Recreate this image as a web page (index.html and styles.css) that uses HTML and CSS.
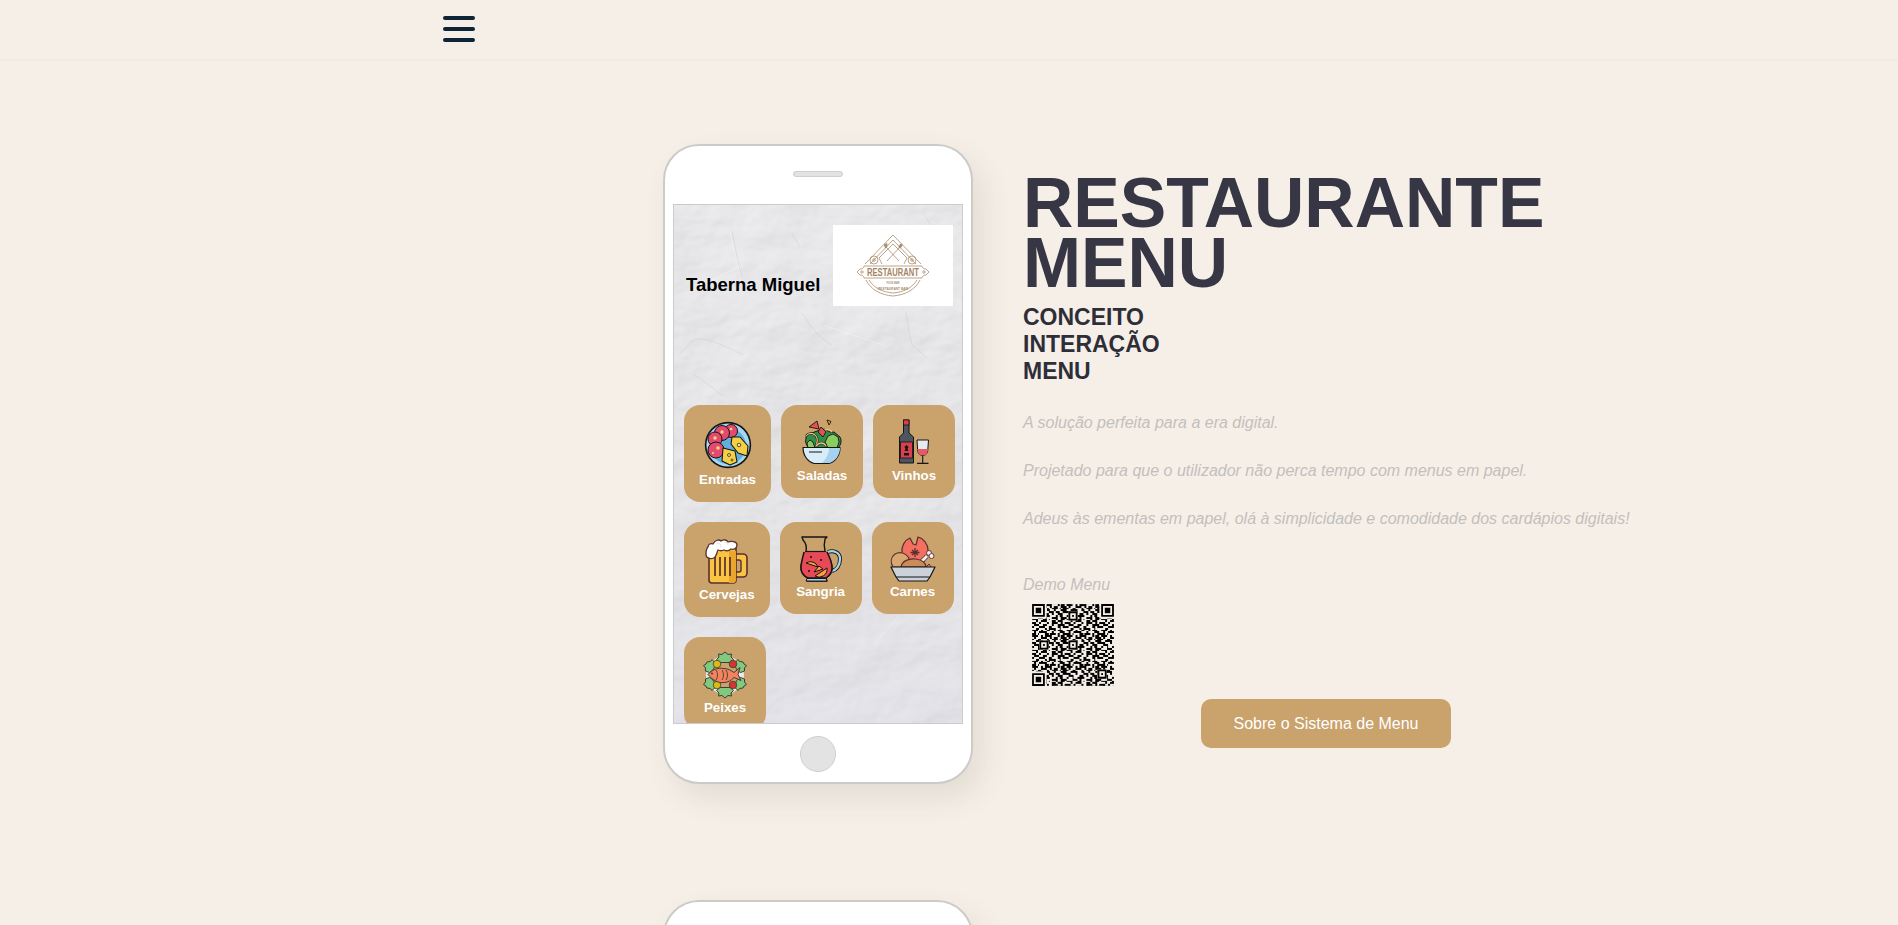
FILE: index.html
```html
<!DOCTYPE html>
<html lang="pt">
<head>
<meta charset="utf-8">
<title>Restaurante Menu</title>
<link rel="stylesheet" href="styles.css">
</head>
<body>
<header class="topbar">
  <button class="burger" aria-label="Menu"><span></span><span></span><span></span></button>
</header>

<main class="page">
  <section class="hero">
    <div class="phone">
      <div class="speaker"></div>
      <div class="screen">
        <svg class="plaster" width="288" height="518" aria-hidden="true">
          <defs>
            <filter id="plasterFx" x="0" y="0" width="100%" height="100%">
              <feTurbulence type="fractalNoise" baseFrequency="0.014 0.02" numOctaves="4" seed="11" result="n"/>
              <feDiffuseLighting in="n" surfaceScale="3" diffuseConstant="1.02" lighting-color="#eeeef1">
                <feDistantLight azimuth="225" elevation="62"/>
              </feDiffuseLighting>
            </filter>
            <linearGradient id="plasterTint" x1="0" y1="0" x2="0" y2="1">
              <stop offset="0" stop-color="#f2f2f2" stop-opacity=".35"/>
              <stop offset=".55" stop-color="#e6e6ea" stop-opacity=".2"/>
              <stop offset="1" stop-color="#dfdfe8" stop-opacity=".5"/>
            </linearGradient>
          </defs>
          <rect width="288" height="518" filter="url(#plasterFx)"/>
          <rect width="288" height="518" fill="url(#plasterTint)"/>
          <g class="streaks">
            <path d="M58 26c3 16 6 32 10 48M118 28l8 14M5 150c8-8 14-18 24-16 14 3 28 10 40 16M232 106c2 12 3 24 6 34l14 12M250 10l10 14M128 108c8 10 14 24 30 32M215 380c14-12 26-24 40-36M20 170c10 6 18 12 30 22"/>
          </g>
          <g class="streaks-light">
            <path d="M56 26c3 18 8 34 12 50M10 90c20-10 40-22 60-30M150 120c20 8 40 14 60 20M30 200c24 10 46 24 70 34M200 440c20-24 40-46 60-70"/>
          </g>
        </svg>
        <div class="screen-body">
          <div class="menu-head">
            <div class="venue">Taberna Miguel</div>
            <div class="logo">
              <svg width="120" height="81" viewBox="0 0 120 81" role="img" aria-label="Restaurant">
                <g class="logo-line">
                  <path d="M32 39L60 10l28 29"/>
                  <path d="M37 39L60 15l23 24"/>
                  <path d="M60 19L46 33l3 6M60 19l14 14-3 6"/>
                  <path d="M53 22l13 14M67 22L54 36"/>
                  <circle cx="41" cy="35" r="4"/>
                  <circle cx="79" cy="35" r="4"/>
                  <circle cx="41" cy="35" r="1.300"/>
                  <circle cx="79" cy="35" r="1.300"/>
                  <path d="M31 41h58c0 2 2 3 4 3l3 3-3 3c-2 0-4 1-4 3H31c0-2-2-3-4-3l-3-3 3-3c2 0 4-1 4-3z"/>
                  <circle cx="29" cy="47" r="1.200"/>
                  <circle cx="91" cy="47" r="1.200"/>
                  <path d="M36 55c5 8 13 12 24 13 11-1 19-5 24-13"/>
                  <path d="M33 55c5 10 15 15 27 16 12-1 22-6 27-16"/>
                </g>
                <ellipse class="logo-fill" cx="67.500" cy="21" rx="1.500" ry="2.500" transform="rotate(40 67.500 21)"/>
                <path class="logo-fill" d="M50.500 19l1 .5.500-1 1 .5.500-1 1 .5-.500 4-2 .5z"/>
                <text class="logo-name" x="60" y="51.300" text-anchor="middle" textLength="52" lengthAdjust="spacingAndGlyphs">RESTAURANT</text>
                <text class="logo-small" x="60" y="58.500" text-anchor="middle" textLength="13" lengthAdjust="spacingAndGlyphs">FOOD BAR</text>
                <text class="logo-small" x="60" y="64.500" text-anchor="middle" textLength="30" lengthAdjust="spacingAndGlyphs">RESTAURANT BAR</text>
              </svg>
            </div>
          </div>

          <div class="cards">
            <a class="card card-xl">
              <div class="pic">
                <svg viewBox="0 0 48 48" width="48" height="48" aria-hidden="true">
                  <circle cx="24" cy="24" r="23.200" fill="#151515"/>
                  <circle cx="24" cy="24" r="21.600" fill="#a5d8f3"/>
                  <circle cx="24" cy="25" r="18" fill="#62aedd"/>
                  <g stroke="#151515" stroke-width="1" fill="#e34a6f">
                    <circle cx="27" cy="10" r="6.500"/>
                    <circle cx="18" cy="12" r="7.500"/>
                    <circle cx="11" cy="18" r="7"/>
                    <circle cx="12" cy="29" r="8"/>
                  </g>
                  <g fill="#f7d774">
                    <circle cx="18" cy="11" r="1.700"/><circle cx="11" cy="17" r="1.700"/><circle cx="27" cy="8" r="1.300"/><circle cx="14" cy="27" r="1.800"/><circle cx="9" cy="32" r="1"/>
                  </g>
                  <g stroke="#151515" stroke-width="1.100" fill="#f6cf45" stroke-linejoin="round">
                    <path d="M28 16h8l8 9-1 10-9-3-7-9z"/>
                    <path d="M19 27l12 3 2 11-7 3-8-4z"/>
                  </g>
                  <g fill="#fbe88f" stroke="#151515" stroke-width=".7">
                    <circle cx="35" cy="24" r="1.800"/><circle cx="25" cy="34" r="1.500"/><circle cx="28" cy="39" r="1"/>
                  </g>
                </svg>
              </div>
              <span class="label">Entradas</span>
            </a>

            <a class="card">
              <div class="pic">
                <svg viewBox="0 0 48 48" width="48" height="48" aria-hidden="true">
                  <path d="M8 19c0-3 3-5 6-5l5-2 7-2 6 3 4 0 6 5c2 4 1 8-2 11H11c-3-3-4-6-3-10z" fill="#2f8f4a" stroke="#151515" stroke-width="1"/>
                  <path d="M30 17l5-2 5 3 1 5-2 6h-9l-3-6z" fill="#8ccb5e" stroke="#151515" stroke-width=".9"/>
                  <path d="M9 24l3-3 3 2 2 6H10z" fill="#8ccb5e" stroke="#151515" stroke-width=".9"/>
                  <path d="M8 17c3-4 8-3 10 0s2 5 0 9" fill="none" stroke="#151515" stroke-width="2.300"/>
                  <path d="M8 17c3-4 8-3 10 0s2 5 0 9" fill="none" stroke="#f4c27c" stroke-width="1.200"/>
                  <path d="M18 27c3-4 8-4 10 0" fill="none" stroke="#151515" stroke-width="2.500"/>
                  <path d="M18 27c3-4 8-4 10 0" fill="none" stroke="#f4c27c" stroke-width="1.300"/>
                  <path d="M25 12c3-2 7-2 9 1" fill="none" stroke="#f4c27c" stroke-width="1.500"/>
                  <path d="M11 8l8-6 2 8z" fill="#e94f4f" stroke="#151515" stroke-width=".9" stroke-linejoin="round"/>
                  <path d="M20 13l3-5 5 5-3 5z" fill="#e94f4f" stroke="#151515" stroke-width=".9" stroke-linejoin="round"/>
                  <path d="M29 1l4 1.500-2 3.500z" fill="#f7a823" stroke="#151515" stroke-width=".9" stroke-linejoin="round"/>
                  <path d="M5 28.500h37c0 9-6 15-11 16H16c-5-1-11-7-11-16z" fill="#d9ecfa" stroke="#151515" stroke-width="1.200" stroke-linejoin="round"/>
                  <path d="M31 29c0 6-3 11-7 15h7c5-1 11-7 11-15z" fill="#a6d2ef"/>
                  <path d="M5 28.500h37M11 33h13" fill="none" stroke="#151515" stroke-width="1"/>
                </svg>
              </div>
              <span class="label">Saladas</span>
            </a>

            <a class="card">
              <div class="pic">
                <svg viewBox="0 0 48 48" width="48" height="48" aria-hidden="true">
                  <path d="M13.500 1h5.500v13l4.500 4v26h-14V18l4-4z" fill="#4c5560" stroke="#151515" stroke-width="1" stroke-linejoin="round"/>
                  <rect x="13.500" y="1" width="5.500" height="5" fill="#d93f4c" stroke="#151515" stroke-width=".8"/>
                  <rect x="10.500" y="23" width="12" height="16" fill="#d93f4c" stroke="#151515" stroke-width=".8"/>
                  <path d="M16.500 26l2 2-1 2 1 2h-4l1-2-1-2z" fill="#151515"/>
                  <rect x="14" y="34" width="5" height="2.500" fill="#151515"/>
                  <path d="M27 21h11.500l-.8 11c-.4 3-2.500 4.500-5 4.500s-4.600-1.500-5-4.500z" fill="#e7eaee" stroke="#151515" stroke-width="1" stroke-linejoin="round"/>
                  <path d="M27.400 30h10.700l-.4 2c-.4 3-2.500 4.500-5 4.500s-4.600-1.500-5-4.500z" fill="#e55a66"/>
                  <path d="M32.700 36.500V44M27 44.400h11.500" fill="none" stroke="#151515" stroke-width="1.100"/>
                </svg>
              </div>
              <span class="label">Vinhos</span>
            </a>

            <a class="card card-lg">
              <div class="pic">
                <svg viewBox="0 0 48 48" width="48" height="48" aria-hidden="true">
                  <path d="M32 17h8a4 4 0 0 1 4 4v15a4 4 0 0 1-4 4h-8z" fill="#f9c440" stroke="#5b2e33" stroke-width="1.600" stroke-linejoin="round"/>
                  <path d="M32 23h4c1 0 2 1 2 2v8c0 1-1 2-2 2h-4z" fill="#c9a26c" stroke="#5b2e33" stroke-width="1.400"/>
                  <path d="M6 10h27v33a3 3 0 0 1-3 3H9a3 3 0 0 1-3-3z" fill="#f9c440" stroke="#5b2e33" stroke-width="1.600"/>
                  <path d="M26 14h7v29a3 3 0 0 1-3 3h-4z" fill="#e9a52c"/>
                  <path d="M12 20v19M17 20v19M22 20v19M27 20v19" stroke="#5b2e33" stroke-width="1.700" fill="none"/>
                  <path d="M6 21c-2 0-3-2-3-4 0-3 0-5 2-7 0-3 3-4 5-3 2-4 6-5 8-3 3-2 6-1 7 1 3-1 9-1 9 3 0 3-3 5-6 4-2 2-5 2-7 1-2 1-4 1-6 0-1 2-1 4-2 5 0 2-4 5-7 3z" fill="#fff" stroke="#5b2e33" stroke-width="1.300" stroke-linejoin="round"/>
                  <path d="M14 6c3 0 4 2 4 4M22 5c2 0 3 1 3 3" fill="none" stroke="#ddd" stroke-width="1"/>
                </svg>
              </div>
              <span class="label">Cervejas</span>
            </a>

            <a class="card card-sm">
              <div class="pic">
                <svg viewBox="0 0 48 48" width="48" height="48" aria-hidden="true">
                  <path d="M31 16c5-2 12 0 12 7 0 7-4 11-8 12" fill="none" stroke="#151515" stroke-width="4"/>
                  <path d="M31 16c5-2 12 0 12 7 0 7-4 11-8 12" fill="none" stroke="#a9d5e8" stroke-width="2.200"/>
                  <path d="M5 1h25l-2 2c-1 4-1 8 0 12 2 4 7 9 7 17 0 5-3 8-6 10l1 3H10l1-3c-4-2-7-5-7-10 0-8 4-12 5-16 1-5 0-9-3-12z" fill="#c9a26c" stroke="#151515" stroke-width="1.400" stroke-linejoin="round"/>
                  <path d="M7 16h23c2 4 5 9 5 16 0 5-3 8-6 10H11c-4-2-7-5-7-10 0-7 2-12 3-16z" fill="#e74a56"/>
                  <path d="M8 15.500h20" stroke="#151515" stroke-width="1.200"/>
                  <path d="M10 42.500h19l1 2.500H9z" fill="#a9d5e8" stroke="#151515" stroke-width="1"/>
                  <path d="M9 27a8 8 0 0 1 12 4L9 27z" fill="#f7a23c" stroke="#151515" stroke-width="1"/>
                  <path d="M18 40a8 8 0 0 0 12-8z" fill="#f7a23c" stroke="#151515" stroke-width="1"/>
                  <path d="M17 36l5-6 4 3z" fill="#f7a23c" stroke="#151515" stroke-width="1"/>
                  <circle cx="14" cy="21" r="1" fill="#151515"/><circle cx="24" cy="24" r="1" fill="#151515"/><circle cx="12" cy="35" r="1" fill="#151515"/>
                  <path d="M4 32c0 5 3 8 7 10h18c3-2 6-5 6-10M7 16c-1 5-3 10-3 16M30 16c2 4 5 9 5 16" fill="none" stroke="#151515" stroke-width="1.500"/>
                </svg>
              </div>
              <span class="label">Sangria</span>
            </a>

            <a class="card card-sm">
              <div class="pic">
                <svg viewBox="0 0 48 48" width="48" height="48" aria-hidden="true">
                  <path d="M13 17c-1-7 3-13 8-15l3 6 3 1 2-8c5 1 10 7 10 13 0 5-2 9-5 12l-14 3c-4-2-6-7-7-12z" fill="#f2705d" stroke="#5b2e33" stroke-width="1.200" stroke-linejoin="round"/>
                  <path d="M26 12v9M21.500 16.500h9M23 14l6 5M29 14l-6 5" stroke="#5b2e33" stroke-width="1.300"/>
                  <path d="M32 26l6-6" stroke="#5b2e33" stroke-width="4.500"/>
                  <path d="M32 26l6-6" stroke="#f5f3ee" stroke-width="2.800"/>
                  <circle cx="40" cy="17" r="2.500" fill="#f5f3ee" stroke="#5b2e33" stroke-width=".9"/>
                  <circle cx="42.500" cy="20" r="2.500" fill="#f5f3ee" stroke="#5b2e33" stroke-width=".9"/>
                  <path d="M4 31c-3-5-2-10 2-13 5-3 11-1 14 4l-3 9z" fill="#d9a871" stroke="#5b2e33" stroke-width="1.200" stroke-linejoin="round"/>
                  <path d="M12 31c1-6 8-9 15-8 6 1 10 4 10 8z" fill="#c98d58" stroke="#5b2e33" stroke-width="1.200" stroke-linejoin="round"/>
                  <path d="M37 31l3-3 2 3" fill="#f2705d" stroke="#5b2e33" stroke-width="1"/>
                  <path d="M2 31h44l-5 10-3 4H10l-3-4z" fill="#ccd2d9" stroke="#151515" stroke-width="1.200" stroke-linejoin="round"/>
                  <path d="M7 41h34" stroke="#151515" stroke-width="1"/>
                </svg>
              </div>
              <span class="label">Carnes</span>
            </a>

            <a class="card">
              <div class="pic">
                <svg viewBox="0 0 48 48" width="48" height="48" aria-hidden="true">
                  <circle cx="24" cy="24" r="16" fill="none" stroke="#e8eaec" stroke-width="6"/>
                  <g fill="#82c97d" stroke="#3a3f3a" stroke-width="1" stroke-linejoin="round">
                    <path d="M24 1l3 2.500 3.500-.5-.5 3 2.500 2.500-3.500 3h-10l-3.500-3 2.500-2.500-.5-3 3.500.5z"/>
                    <path d="M24 47l3-2.500 3.500.5-.5-3 2.500-2.500-3.500-3h-10l-3.500 3 2.500 2.500-.5 3 3.500-.5z"/>
                    <path d="M6 11l3.500-.5 1.500-2 3 3 .5 3-3 5-3 2-4-1.500v-3l-2-2.500 2.500-1.500z"/>
                    <path d="M42 11l-3.500-.5-1.500-2-3 3-.5 3 3 5 3 2 4-1.500v-3l2-2.500-2.500-1.500z"/>
                    <path d="M6 37l3.500.5 1.500 2 3-3 .5-3-3-5-3-2-4 1.500v3l-2 2.500 2.500 1.500z"/>
                    <path d="M42 37l-3.500.5-1.500 2-3-3-.5-3 3-5 3-2 4 1.500v3l2 2.500-2.500 1.500z"/>
                  </g>
                  <circle cx="16" cy="13" r="3.800" fill="#e0b912" stroke="#3a3f3a" stroke-width=".8"/>
                  <circle cx="16" cy="34" r="3.800" fill="#e0b912" stroke="#3a3f3a" stroke-width=".8"/>
                  <circle cx="32" cy="13" r="3.800" fill="#d8342f" stroke="#3a3f3a" stroke-width=".8"/>
                  <circle cx="32" cy="34" r="3.800" fill="#d8342f" stroke="#3a3f3a" stroke-width=".8"/>
                  <path d="M7 23.500c4-5 10-7 16-6 4 0 7 2 10 4l6-5-2 7 3 6-7-3c-3 3-6 5-10 5-6 1-12-3-16-8z" fill="#f5825c" stroke="#3a3f3a" stroke-width="1" stroke-linejoin="round"/>
                  <path d="M15 19c2 3 2 7 0 10M21 19c2 3 2 7 0 10M25 19c2 3 2 7 0 10" fill="none" stroke="#3a3f3a" stroke-width=".9"/>
                  <circle cx="11" cy="22.500" r="1" fill="#3a3f3a"/>
                </svg>
              </div>
              <span class="label">Peixes</span>
            </a>
          </div>
        </div>
      </div>
      <div class="home"></div>
    </div>

    <div class="copy">
      <h1>RESTAURANTE MENU</h1>
      <h3>CONCEITO<br>INTERAÇÃO<br>MENU</h3>
      <p class="lead">A solução perfeita para a era digital.<br><br>Projetado para que o utilizador não perca tempo com menus em papel.<br><br>Adeus às ementas em papel, olá à simplicidade e comodidade dos cardápios digitais!</p>
      <p class="demo">Demo Menu</p>
      <svg class="qr" width="100" height="100" viewBox="-5 -5 55 55" role="img" aria-label="QR code">
        <defs>
          <pattern id="qrTile" width="19" height="17" patternUnits="userSpaceOnUse">
            <path class="qr-run" d="M0 .5h3m2 0h1m1 0h4m3 0h1m1 0h2M1 1.500h1m3 0h3m2 0h1m1 0h2m2 0h3M0 2.500h1m2 0h2m3 0h1m2 0h3m1 0h1m1 0h2M2 3.500h4m2 0h2m2 0h1m3 0h3M0 4.500h2m3 0h1m3 0h3m1 0h2m2 0h2M1 5.500h3m3 0h2m2 0h1m2 0h3m2 0h1M0 6.500h1m2 0h1m2 0h4m3 0h1m1 0h2M3 7.500h3m1 0h1m3 0h3m2 0h3M0 8.500h3m3 0h2m1 0h1m3 0h1m2 0h2M2 9.500h1m2 0h3m3 0h2m1 0h3M0 10.500h2m2 0h1m3 0h1m2 0h3m2 0h1m1 0h1M1 11.500h3m2 0h2m3 0h1m2 0h4M0 12.500h1m3 0h3m2 0h2m3 0h2m1 0h2M2 13.500h2m3 0h1m1 0h4m2 0h1M0 14.500h3m2 0h1m2 0h2m2 0h1m1 0h3M1 15.500h1m2 0h4m3 0h1m3 0h3M0 16.500h2m1 0h1m3 0h2m1 0h3m1 0h1m2 0h2"/>
          </pattern>
          <g id="qrFinder">
            <rect class="qr-gap" x="-1" y="-1" width="9" height="9"/>
            <path class="qr-mark" d="M0 0h7v7H0zM1 1v5h5V1z"/>
            <rect class="qr-mark" x="2" y="2" width="3" height="3"/>
          </g>
          <g id="qrAlign">
            <rect class="qr-gap" width="5" height="5"/>
            <path class="qr-mark" d="M0 0h5v5H0zM1 1v3h3V1z"/>
            <rect class="qr-mark" x="2" y="2" width="1" height="1"/>
          </g>
        </defs>
        <rect width="45" height="45" fill="url(#qrTile)"/>
        <use href="#qrFinder"/>
        <use href="#qrFinder" x="38"/>
        <use href="#qrFinder" y="38"/>
        <use href="#qrAlign" x="20" y="20"/>
        <use href="#qrAlign" x="36" y="36"/>
        <use href="#qrAlign" x="20" y="4"/>
        <use href="#qrAlign" x="4" y="20"/>
      </svg>
      <a class="about">Sobre o Sistema de Menu</a>
    </div>
  </section>

  <section class="hero hero-next">
    <div class="phone">
      <div class="speaker"></div>
    </div>
  </section>
</main>
</body>
</html>
```
FILE: styles.css
```css
* { box-sizing: border-box; }

html, body {
  margin: 0;
  height: 925px;
  overflow: hidden;
}

body {
  background: #f6efe8;
  font-family: "Liberation Sans", Arial, sans-serif;
}

.topbar {
  height: 60px;
  padding: 0 0 1px 443px;
  display: flex;
  align-items: center;
  border-bottom: 1px solid #efe9e3;
  box-shadow: 0 1px 2px rgba(0, 0, 0, 0.02);
}

.burger {
  display: flex;
  flex-direction: column;
  gap: 7px;
  padding: 0;
  border: 0;
  background: none;
}

.burger span {
  display: block;
  width: 32px;
  height: 4px;
  border-radius: 2px;
  background: #0d2436;
}

.page {
  padding: 84px 0 0 663px;
}

.hero {
  display: flex;
  gap: 50px;
  align-items: flex-start;
}

.hero-next {
  margin-top: 116px;
}

.phone {
  width: 310px;
  height: 640px;
  flex: none;
  padding: 25px 8px 0;
  display: flex;
  flex-direction: column;
  align-items: center;
  background: #fff;
  border: 2.500px solid #cdcbc8;
  border-radius: 36px;
  box-shadow: 10px 14px 30px rgba(70, 55, 35, 0.1);
}

.speaker {
  width: 50px;
  height: 6px;
  flex: none;
  background: #e2e2e2;
  border: 1px solid #cfcfcf;
  border-radius: 3px;
}

.screen {
  position: relative;
  width: 290px;
  height: 520px;
  flex: none;
  margin-top: 27px;
  overflow: hidden;
  border: 1px solid #cbcbcb;
  background: #e8e8ec;
}

.plaster {
  position: absolute;
  inset: 0;
}

.streaks path {
  fill: none;
  stroke: #b9b9c0;
  stroke-width: 0.7;
  opacity: 0.4;
}

.streaks-light path {
  fill: none;
  stroke: #ffffff;
  stroke-width: 1;
  opacity: 0.3;
}

.screen-body {
  position: relative;
}

.menu-head {
  display: flex;
  justify-content: space-between;
  align-items: flex-start;
  padding: 20px 9px 0 12px;
}

.venue {
  margin-top: 49px;
  font-size: 18.500px;
  line-height: 21px;
  font-weight: 700;
  color: #000;
}

.logo {
  width: 120px;
  height: 81px;
  background: #fff;
}

.logo svg {
  display: block;
}

.logo-line {
  fill: none;
  stroke: #a98d70;
  stroke-width: 0.8;
}

.logo-fill {
  fill: #a98d70;
}

.logo-name {
  font-family: "Liberation Sans", Arial, sans-serif;
  font-size: 11.500px;
  font-weight: 700;
  fill: #a3855f;
}

.logo-small {
  font-family: "Liberation Sans", Arial, sans-serif;
  font-size: 3px;
  font-weight: 700;
  fill: #a98d70;
}

.cards {
  display: flex;
  flex-wrap: wrap;
  align-items: flex-start;
  gap: 20px 10px;
  margin-top: 99px;
  padding: 0 0 0 10px;
}

.card {
  min-width: 82px;
  padding: 13px 15px 15px;
  display: flex;
  flex-direction: column;
  align-items: center;
  background: #c9a26c;
  border-radius: 16px;
  color: #fff;
}

.pic {
  height: 50px;
  display: flex;
  align-items: center;
  justify-content: center;
}

.pic svg {
  flex: none;
  display: block;
}

.card-xl .pic { height: 54px; }
.card-lg .pic { height: 52px; }
.card-sm .pic { height: 49px; }

.label {
  font-size: 13.330px;
  line-height: 15px;
  font-weight: 700;
  white-space: nowrap;
}

.home {
  width: 36px;
  height: 36px;
  flex: none;
  margin-top: 12px;
  background: #e3e3e3;
  border: 1px solid #cfcfcf;
  border-radius: 50%;
}

.copy {
  width: 606px;
  padding-top: 29px;
  color: #c2bfbc;
}

h1 {
  margin: 0;
  width: 560px;
  font-size: 69.700px;
  line-height: 60px;
  font-weight: 700;
  color: #363644;
}

h3 {
  margin: 11px 0 0;
  font-size: 23px;
  line-height: 27px;
  font-weight: 700;
  color: #2e2e38;
}

.lead {
  margin: 26px 0 0;
  font-size: 16px;
  line-height: 24px;
  font-style: italic;
  white-space: nowrap;
}

.demo {
  margin: 42px 0 0;
  font-size: 16px;
  line-height: 24px;
  font-style: italic;
}

.qr {
  display: block;
  margin-top: -2px;
}

.qr-run {
  fill: none;
  stroke: #000;
  stroke-width: 1;
  shape-rendering: crispEdges;
}

.qr-mark {
  fill: #000;
  fill-rule: evenodd;
}

.qr-gap {
  fill: #f6efe8;
}

.about {
  display: block;
  width: 250px;
  height: 49px;
  margin: 4px auto 0;
  background: #c9a26c;
  border-radius: 10px;
  color: #fff;
  font-size: 16px;
  line-height: 49px;
  text-align: center;
}
```
